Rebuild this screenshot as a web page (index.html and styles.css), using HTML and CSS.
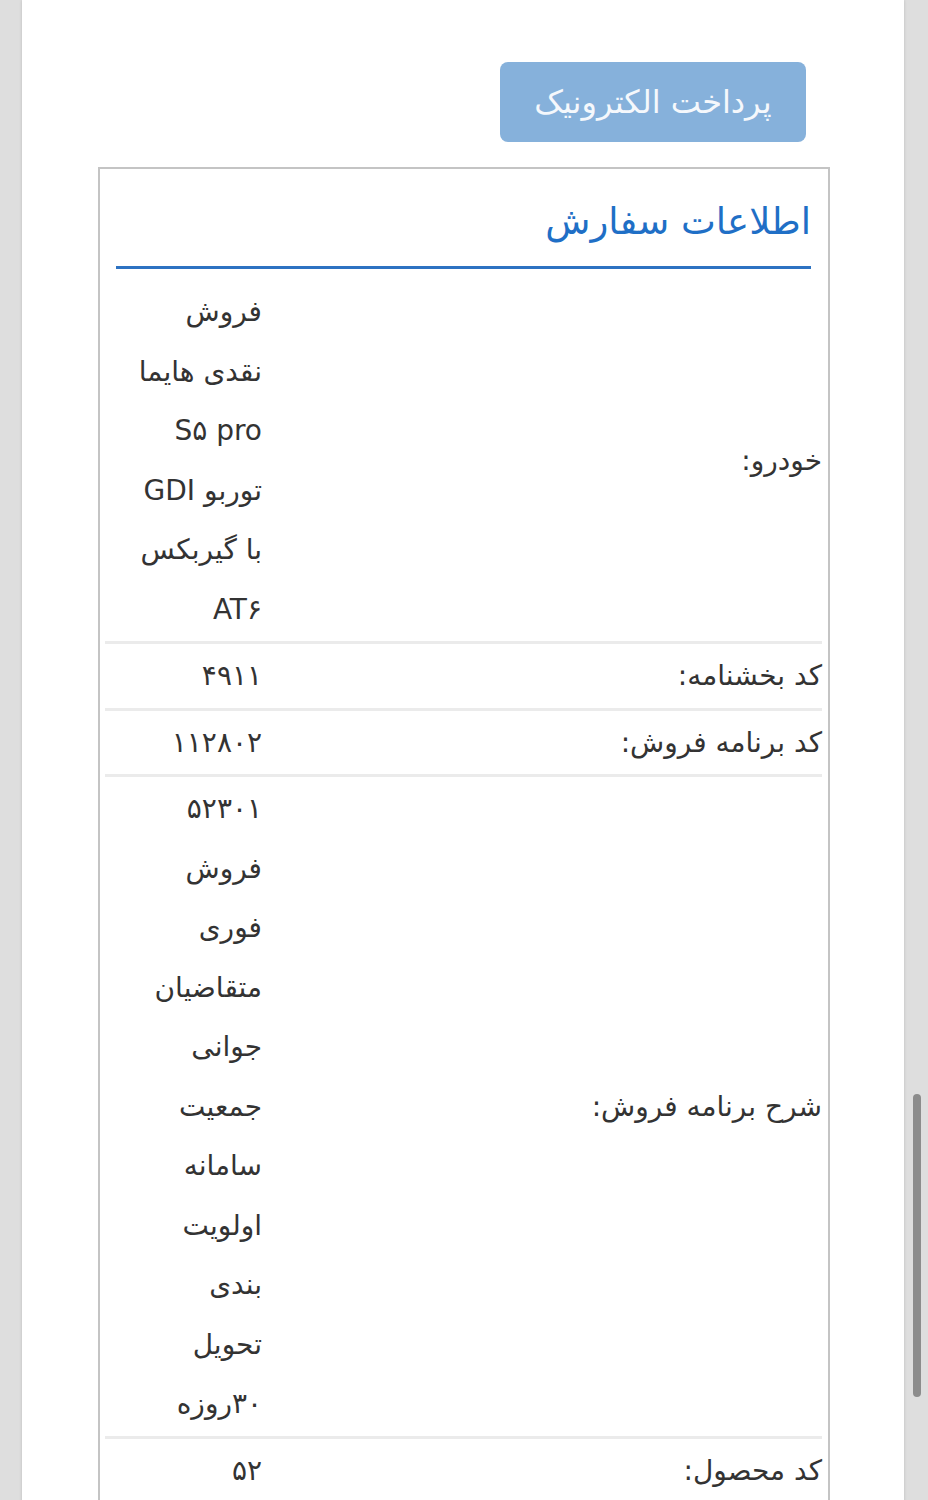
FILE: index.html
```html
<!DOCTYPE html>
<html lang="fa" dir="rtl">
<head>
    <meta charset="UTF-8">
    <meta name="viewport" content="width=device-width, initial-scale=1.0">
    <title>اطلاعات سفارش</title>
    <link rel="stylesheet" href="styles.css">
</head>
<body>
    <div class="page">
        <div class="actions">
            <button class="btn-pay" disabled>پرداخت الکترونیک</button>
        </div>

        <div class="panel">
            <div class="panel-head">
                <h2 class="panel-title">اطلاعات سفارش</h2>
            </div>

            <table class="info-table">
                <colgroup>
                    <col class="col-label">
                    <col class="col-value">
                </colgroup>
                <tr>
                    <th>خودرو:</th>
                    <td>فروش<br>نقدی هایما<br>S۵ pro<br>توربو GDI<br>با گیربکس<br>AT۶</td>
                </tr>
                <tr>
                    <th>کد بخشنامه:</th>
                    <td>۴۹۱۱</td>
                </tr>
                <tr>
                    <th>کد برنامه فروش:</th>
                    <td>۱۱۲۸۰۲</td>
                </tr>
                <tr>
                    <th>شرح برنامه فروش:</th>
                    <td>۵۲۳۰۱<br>فروش<br>فوری<br>متقاضیان<br>جوانی<br>جمعیت<br>سامانه<br>اولویت<br>بندی<br>تحویل<br>۳۰روزه</td>
                </tr>
                <tr>
                    <th>کد محصول:</th>
                    <td>۵۲</td>
                </tr>
            </table>
        </div>
    </div>

    <!-- اسکرول بار موبایل -->
    <div class="scroll-thumb"></div>
</body>
</html>
```

FILE: styles.css
```css
html, body {
    margin: 0;
    padding: 0;
}

body {
    background: #dedede;
    font-family: "DejaVu Sans", sans-serif;
    color: #333333;
    overflow: hidden;
}

.page {
    margin: 0 24px 0 22px;
    min-height: 1500px;
    background: #ffffff;
    box-shadow: 0 0 3px rgba(0, 0, 0, 0.15);
    padding-top: 62px;
    box-sizing: border-box;
}

.actions {
    display: flex;
    padding: 0 98px;
    margin-bottom: 25px;
}

.btn-pay {
    width: 306px;
    height: 80px;
    border: 0;
    border-radius: 8px;
    background: #86b1db;
    color: #f5f8fc;
    font-family: "DejaVu Sans", sans-serif;
    font-size: 32px;
    padding: 0;
}

.panel {
    margin: 0 74px 0 76px;
    border: 2px solid #c4c4c4;
    border-bottom: 0;
    min-height: 1340px;
}

.panel-head {
    margin: 0 17px 0 16px;
    border-bottom: 3px solid #2d72c2;
    height: 97px;
    display: flex;
    align-items: center;
}

.panel-title {
    margin: 8px 0 0;
    font-size: 37px;
    font-weight: normal;
    color: #1f6fc6;
}

.info-table {
    width: 717px;
    margin: 11px 6px 0 5px;
    border-collapse: collapse;
    table-layout: fixed;
}

.col-label { width: 552px; }
.col-value { width: 165px; }

.info-table tr + tr {
    border-top: 3px solid #ebebeb;
}

.info-table th,
.info-table td {
    padding: 2px 0;
    font-size: 28px;
    font-weight: normal;
    line-height: 59.5px;
    text-align: right;
    vertical-align: middle;
    white-space: nowrap;
}

.info-table td {
    padding-right: 8px;
}

.scroll-thumb {
    position: fixed;
    top: 1094px;
    left: 913px;
    width: 8px;
    height: 303px;
    border-radius: 4px;
    background: #8c8c8c;
}
```
